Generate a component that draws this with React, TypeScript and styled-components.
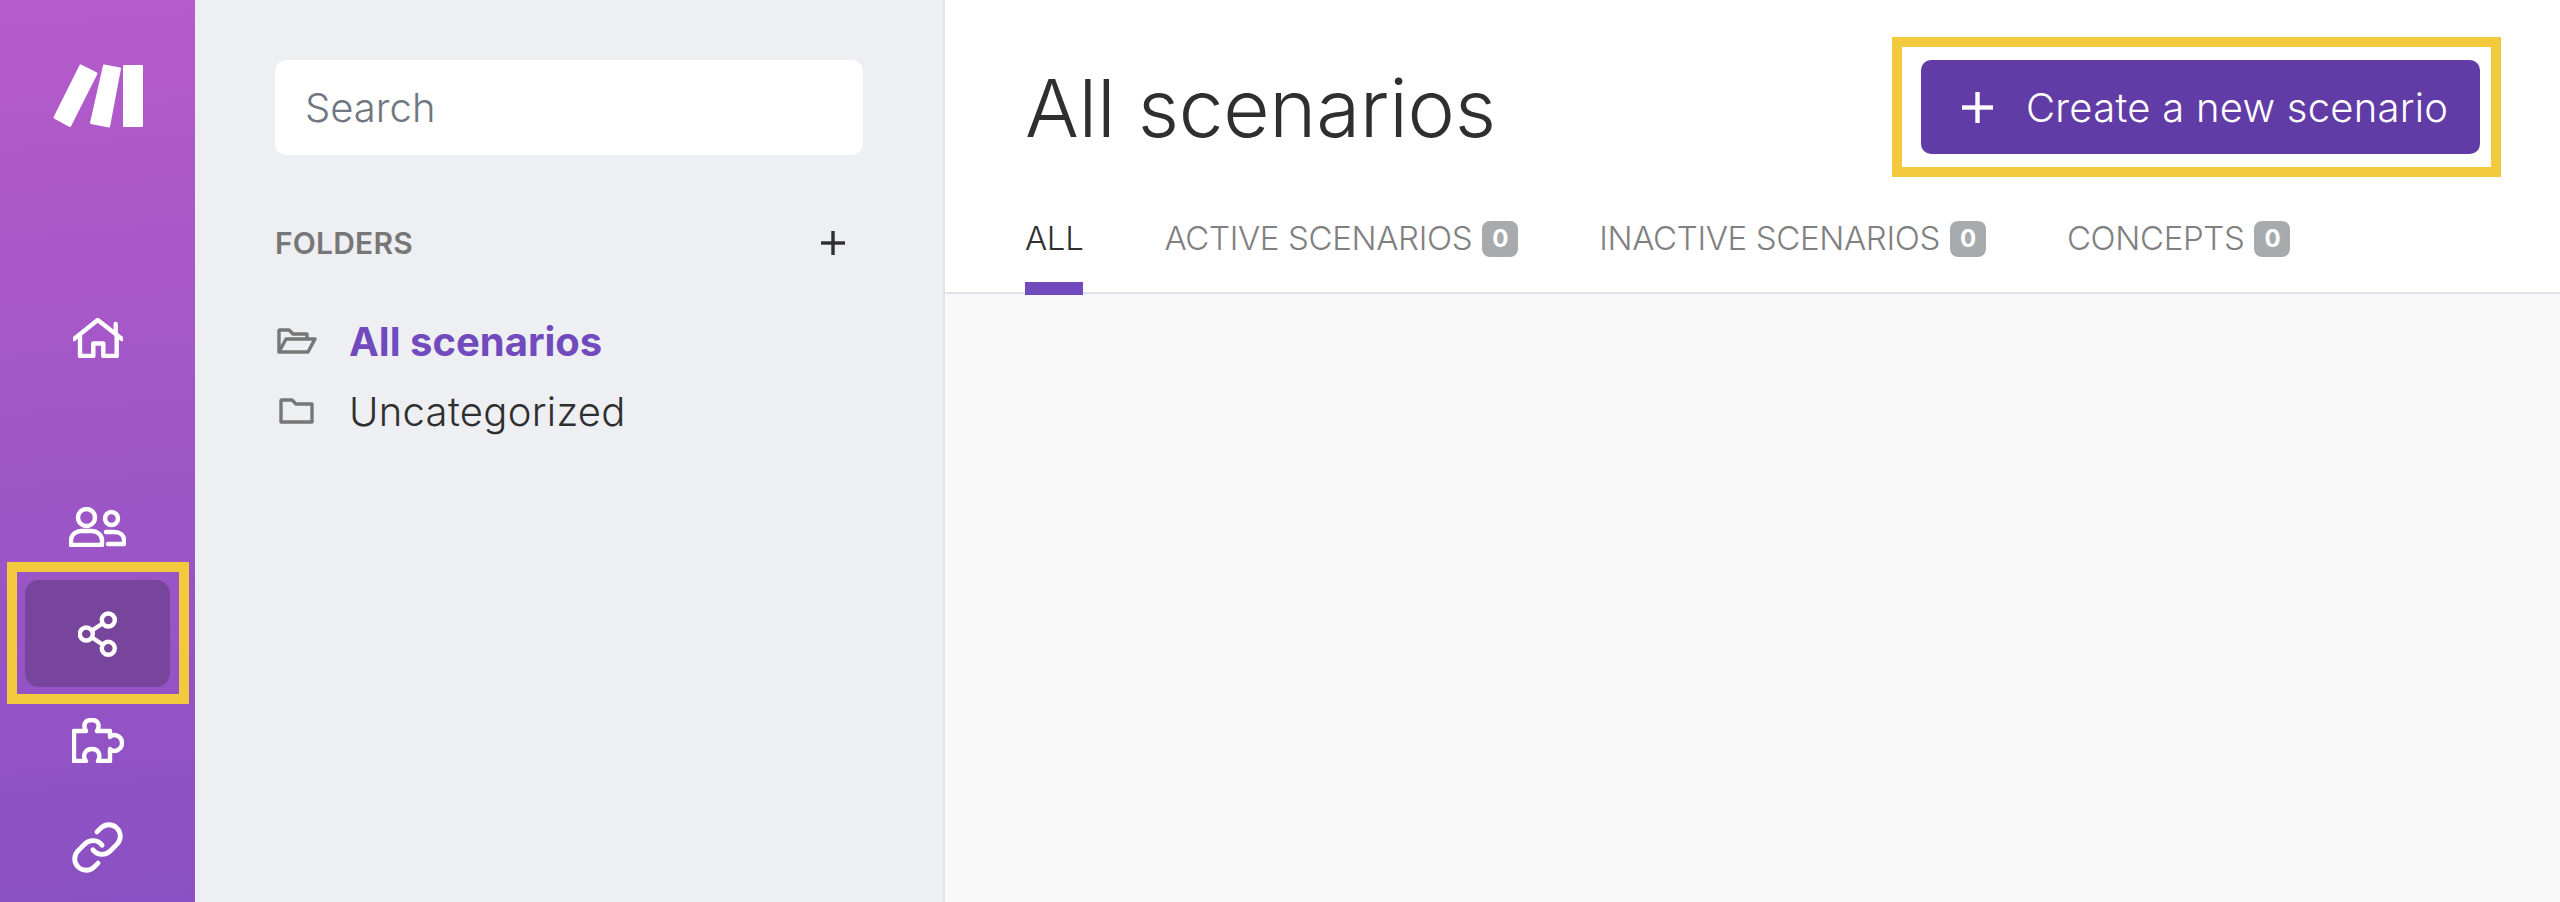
import styled, { createGlobalStyle } from 'styled-components';

const TABS = [
  { label: 'ALL', active: true },
  { label: 'ACTIVE SCENARIOS', count: 0 },
  { label: 'INACTIVE SCENARIOS', count: 0 },
  { label: 'CONCEPTS', count: 0 },
];

const GlobalStyle = createGlobalStyle`
  html, body {
    margin: 0;
    height: 100%;
    overflow: hidden;
  }
  body {
    font-family: Inter, "Liberation Sans", sans-serif;
    color: #2f2f2f;
  }
`;

const Layout = styled.div`
  display: flex;
  height: 902px;
`;

const Sidebar = styled.nav`
  width: 195px;
  flex-shrink: 0;
  padding-top: 64px;
  box-sizing: border-box;
  display: flex;
  flex-direction: column;
  align-items: center;
  background: linear-gradient(175deg, #b65bcb 0%, #8951c3 100%);
`;

const LogoMark = styled.svg`
  display: block;
  width: 90px;
  height: 64px;
  margin-bottom: 156px;
  margin-left: 1px;
`;

const NavGroup = styled.div`
  display: flex;
  flex-direction: column;
  margin-top: ${(p: { $gap?: number }) => p.$gap || 0}px;
`;

const NavItem = styled.a<{ $active?: boolean }>`
  position: relative;
  width: 145px;
  height: 107px;
  border-radius: 14px;
  display: flex;
  align-items: center;
  justify-content: center;
  background: ${(p) => (p.$active ? '#78459c' : 'transparent')};

  ${(p) =>
    p.$active &&
    `
    &::after {
      content: '';
      position: absolute;
      left: -18px;
      right: -19px;
      top: -18px;
      bottom: -17px;
      border: 10px solid #f3c93e;
    }
  `}
`;

const NavIcon = styled.svg`
  display: block;
  fill: none;
  stroke: #fff;
  stroke-width: 4.4;
  stroke-linecap: round;
  stroke-linejoin: round;
`;

const FolderPanel = styled.aside`
  width: 750px;
  flex-shrink: 0;
  box-sizing: border-box;
  padding: 60px 80px 0 80px;
  background: #edeff3;
  border-right: 2px solid #e2e2ea;
`;

const SearchBox = styled.div`
  height: 95px;
  box-sizing: border-box;
  padding-left: 30px;
  display: flex;
  align-items: center;
  background: #fff;
  border-radius: 12px;
  color: #6f7780;
  font-size: 40px;
  font-weight: 300;
`;

const FoldersHead = styled.div`
  margin-top: 68px;
  height: 40px;
  display: flex;
  align-items: center;
  justify-content: space-between;
  padding-right: 18px;
`;

const FoldersTitle = styled.span`
  font-size: 30px;
  font-weight: 600;
  letter-spacing: 0.2px;
  color: #777;
`;

const SmallPlus = styled.svg`
  display: block;
  width: 24px;
  height: 24px;
  stroke: #2f2f2f;
  stroke-width: 3.4;
`;

const FolderList = styled.ul`
  list-style: none;
  margin: 43px 0 0;
  padding: 0;
`;

const FolderRow = styled.li`
  height: 70px;
  display: flex;
  align-items: center;
`;

const FolderSlot = styled.span`
  width: 74px;
  display: flex;
  justify-content: center;
  padding-right: 31px;
  box-sizing: border-box;
`;

const FolderIcon = styled.svg`
  display: block;
  fill: none;
  stroke: #777;
  stroke-width: 3.4;
  stroke-linejoin: round;
`;

const FolderName = styled.span<{ $active?: boolean }>`
  font-size: 40px;
  font-weight: ${(p) => (p.$active ? 700 : 300)};
  letter-spacing: ${(p) => (p.$active ? 0 : 0.3)}px;
  color: ${(p) => (p.$active ? '#714bbd' : '#2f2f2f')};
`;

const Main = styled.main`
  flex: 1;
  display: flex;
  flex-direction: column;
  background: #f8f8f9;
`;

const Header = styled.header`
  height: 294px;
  box-sizing: border-box;
  padding: 60px 80px 0 80px;
  background: #fff;
  border-bottom: 2px solid #e2e2ea;
`;

const TitleRow = styled.div`
  display: flex;
  align-items: center;
  justify-content: space-between;
  height: 94px;
`;

const Title = styled.h1`
  margin: 0;
  font-size: 80px;
  font-weight: 300;
  letter-spacing: -0.25px;
  color: #2f2f2f;
`;

const CreateButton = styled.button`
  position: relative;
  width: 559px;
  height: 94px;
  padding: 0 0 0 41px;
  display: flex;
  align-items: center;
  gap: 33px;
  border: 0;
  border-radius: 10px;
  background: #613ca6;
  color: #fff;
  font-family: inherit;
  font-size: 40px;
  font-weight: 300;
  letter-spacing: 0.25px;

  &::after {
    content: '';
    position: absolute;
    left: -29px;
    right: -21px;
    top: -23px;
    bottom: -23px;
    border: 10px solid #f3c93e;
  }
`;

const ButtonPlus = styled.svg`
  display: block;
  width: 31px;
  height: 31px;
  stroke: #fff;
  stroke-width: 3.4;
`;

const TabBar = styled.div`
  display: flex;
  gap: 81px;
  margin-top: 46px;
`;

const Tab = styled.a<{ $active?: boolean }>`
  height: 95px;
  box-sizing: border-box;
  padding-top: 18px;
  display: flex;
  align-items: flex-start;
  gap: 10px;
  font-size: 33px;
  font-weight: 300;
  line-height: 40px;
  letter-spacing: -0.35px;
  color: ${(p) => (p.$active ? '#2f2f2f' : '#808080')};
  border-bottom: 13px solid ${(p) => (p.$active ? '#714bbd' : 'transparent')};
`;

const Badge = styled.span`
  width: 36px;
  height: 36px;
  border-radius: 8px;
  margin-top: 3px;
  display: flex;
  align-items: center;
  justify-content: center;
  background: #a8abae;
  color: #fff;
  font-size: 24px;
  font-weight: 700;
`;

const Plus = () => (
  <>
    <line x1='0' y1='12' x2='24' y2='12' />
    <line x1='12' y1='0' x2='12' y2='24' />
  </>
);

const App = () => (
  <Layout>
    <GlobalStyle />
    <Sidebar>
      <LogoMark viewBox='0 0 90 64'>
        <g fill='#fff' stroke='#fff' strokeWidth='2' strokeLinejoin='round'>
          <polygon points='27.5,1.5 43.5,9.5 17,62 1.5,53.5' />
          <polygon points='51,1.5 67,4.5 56,62.5 38,59' />
          <rect x='71' y='2' width='18' height='60' />
        </g>
      </LogoMark>
      <NavItem>
        <NavIcon width='50' height='40' viewBox='0 0 50 40'>
          <path d='M1 21 L24.7 2 L49 21' />
          <path d='M42.7 6 V15' />
          <path d='M7 18 V38 H20.3 V25.5 H30.3 V38 H43.7 V17' />
        </NavIcon>
      </NavItem>
      <NavGroup $gap={82}>
        <NavItem>
          <NavIcon width='57' height='40' viewBox='0 0 57 40'>
            <circle cx='17.5' cy='10.5' r='8.5' />
            <path d='M2 38 V33 C2 27 8 24 12 24 H23 C28 24 33 28 33 33 V38 Z' />
            <circle cx='42.5' cy='11.5' r='6.5' />
            <path d='M37 25 H45 C51 25 55 28 55 33 V37 H39' />
          </NavIcon>
        </NavItem>
        <NavItem $active>
          <NavIcon width='39' height='46' viewBox='0 0 39 46'>
            <circle cx='30.3' cy='9' r='6.5' />
            <circle cx='8.3' cy='23' r='6.5' />
            <circle cx='30.3' cy='37.3' r='6.5' />
            <path d='M14 19.5 L24.5 12.5 M14 26.5 L24.5 33.5' />
          </NavIcon>
        </NavItem>
        <NavItem>
          <NavIcon width='52' height='45' viewBox='0 0 52 45'>
            <path d='M2 13 H14 C11 8 12 2 19.5 2 C27 2 28 8 25 13 H38 V19 C42 15 50 18 50 25 C50 32 42 35 38 31 V43 H26 C29 38 27 31 20 31 C13 31 10 38 14 43 H2 Z' />
          </NavIcon>
        </NavItem>
        <NavItem>
          <NavIcon width='55' height='55' viewBox='0 0 24 24' style={{ strokeWidth: 2.1 }}>
            <path d='M10 13a5 5 0 0 0 7.54.54l3-3a5 5 0 0 0-7.07-7.07l-1.72 1.71' />
            <path d='M14 11a5 5 0 0 0-7.54-.54l-3 3a5 5 0 0 0 7.07 7.07l1.71-1.71' />
          </NavIcon>
        </NavItem>
      </NavGroup>
    </Sidebar>

    <FolderPanel>
      <SearchBox>Search</SearchBox>
      <FoldersHead>
        <FoldersTitle>FOLDERS</FoldersTitle>
        <SmallPlus viewBox='0 0 24 24'>
          <Plus />
        </SmallPlus>
      </FoldersHead>
      <FolderList>
        <FolderRow>
          <FolderSlot>
            <FolderIcon width='40' height='26' viewBox='0 0 40 26'>
              <path d='M2 24 V3 Q2 2 3 2 H12 L16 6 H30 V11' />
              <path d='M2 24 H31 L38 11 H9 Z' />
            </FolderIcon>
          </FolderSlot>
          <FolderName $active>All scenarios</FolderName>
        </FolderRow>
        <FolderRow>
          <FolderSlot>
            <FolderIcon width='35' height='26' viewBox='0 0 35 26'>
              <path d='M2 3 Q2 2 3 2 H13 L17 6 H33 V24 H2 Z' />
            </FolderIcon>
          </FolderSlot>
          <FolderName>Uncategorized</FolderName>
        </FolderRow>
      </FolderList>
    </FolderPanel>

    <Main>
      <Header>
        <TitleRow>
          <Title>All scenarios</Title>
          <CreateButton>
            <ButtonPlus viewBox='0 0 24 24'>
              <Plus />
            </ButtonPlus>
            Create a new scenario
          </CreateButton>
        </TitleRow>
        <TabBar>
          {TABS.map((tab) => (
            <Tab key={tab.label} $active={tab.active}>
              {tab.label}
              {tab.count !== undefined && <Badge>{tab.count}</Badge>}
            </Tab>
          ))}
        </TabBar>
      </Header>
    </Main>
  </Layout>
);

export default App;
